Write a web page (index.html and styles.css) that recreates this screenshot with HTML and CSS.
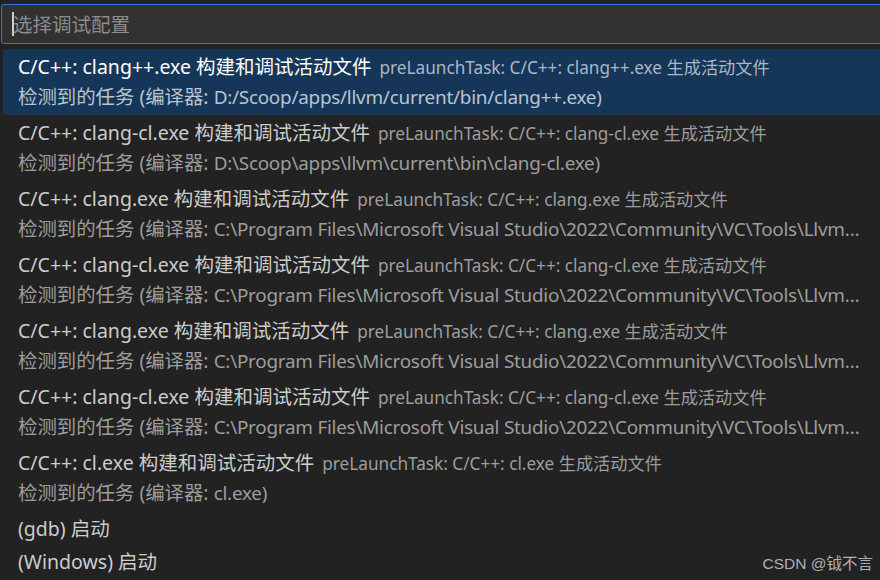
FILE: index.html
```html
<!DOCTYPE html>
<html lang="zh">
<head>
<meta charset="utf-8">
<title>选择调试配置</title>
<link rel="stylesheet" href="styles.css">
</head>
<body>
<div class="picker">
  <div class="input-box">
    <span class="caret"></span>
    <span class="placeholder">选择调试配置</span>
  </div>
  <ul class="list">
    <li class="item two selected">
      <div class="line1"><span class="label">C/C++: clang++.exe 构建和调试活动文件</span><span class="desc">preLaunchTask: C/C++: clang++.exe 生成活动文件</span></div>
      <div class="line2"><span class="task">检测到的任务 (编译器: </span><span class="path">D:/Scoop/apps/llvm/current/bin/clang++.exe)</span></div>
    </li>
    <li class="item two">
      <div class="line1"><span class="label">C/C++: clang-cl.exe 构建和调试活动文件</span><span class="desc">preLaunchTask: C/C++: clang-cl.exe 生成活动文件</span></div>
      <div class="line2"><span class="task">检测到的任务 (编译器: </span><span class="path">D:\Scoop\apps\llvm\current\bin\clang-cl.exe)</span></div>
    </li>
    <li class="item two">
      <div class="line1"><span class="label">C/C++: clang.exe 构建和调试活动文件</span><span class="desc">preLaunchTask: C/C++: clang.exe 生成活动文件</span></div>
      <div class="line2"><span class="task">检测到的任务 (编译器: </span><span class="path">C:\Program Files\Microsoft Visual Studio\2022\Community\VC\Tools\Llvm\x64\bin\clang.exe)</span></div>
    </li>
    <li class="item two">
      <div class="line1"><span class="label">C/C++: clang-cl.exe 构建和调试活动文件</span><span class="desc">preLaunchTask: C/C++: clang-cl.exe 生成活动文件</span></div>
      <div class="line2"><span class="task">检测到的任务 (编译器: </span><span class="path">C:\Program Files\Microsoft Visual Studio\2022\Community\VC\Tools\Llvm\x64\bin\clang-cl.exe)</span></div>
    </li>
    <li class="item two">
      <div class="line1"><span class="label">C/C++: clang.exe 构建和调试活动文件</span><span class="desc">preLaunchTask: C/C++: clang.exe 生成活动文件</span></div>
      <div class="line2"><span class="task">检测到的任务 (编译器: </span><span class="path">C:\Program Files\Microsoft Visual Studio\2022\Community\VC\Tools\Llvm\bin\clang.exe)</span></div>
    </li>
    <li class="item two">
      <div class="line1"><span class="label">C/C++: clang-cl.exe 构建和调试活动文件</span><span class="desc">preLaunchTask: C/C++: clang-cl.exe 生成活动文件</span></div>
      <div class="line2"><span class="task">检测到的任务 (编译器: </span><span class="path">C:\Program Files\Microsoft Visual Studio\2022\Community\VC\Tools\Llvm\bin\clang-cl.exe)</span></div>
    </li>
    <li class="item two">
      <div class="line1"><span class="label">C/C++: cl.exe 构建和调试活动文件</span><span class="desc">preLaunchTask: C/C++: cl.exe 生成活动文件</span></div>
      <div class="line2"><span class="task">检测到的任务 (编译器: </span><span class="path">cl.exe)</span></div>
    </li>
    <li class="item one">
      <div class="line1"><span class="label">(gdb) 启动</span></div>
    </li>
    <li class="item one">
      <div class="line1"><span class="label">(Windows) 启动</span></div>
    </li>
  </ul>
  <div class="watermark">CSDN @钺不言</div>
</div>
</body>
</html>
```
FILE: styles.css
```css
html, body {
  margin: 0;
  padding: 0;
  background: #222222;
  overflow: hidden;
}
body {
  width: 880px;
  height: 580px;
  font-family: "Noto Sans", "Noto Sans CJK SC", sans-serif;
  color: #cccccc;
}
.picker {
  position: relative;
  width: 880px;
  height: 580px;
  overflow: hidden;
}
.input-box {
  margin: 4px -20px 0 1px;
  height: 38px;
  border: 1px solid #2b7bd6;
  border-radius: 3px;
  background: #313131;
  display: flex;
  align-items: center;
  padding-left: 10px;
  box-sizing: content-box;
}
.caret {
  width: 2px;
  height: 24px;
  background: #cfcfcf;
  margin-right: -1px;
}
.placeholder {
  font-size: 19.5px;
  color: #8c8c8c;
  font-family: "Noto Sans CJK SC", sans-serif;
  line-height: 24px;
}
.list {
  list-style: none;
  margin: 5px -20px 0 3px;
  padding: 0;
}
.item {
  padding: 0 0 0 15px;
  border-radius: 4px;
  margin-right: 20px;
}
.item.two { height: 66px; }
.item.one { height: 33px; }
.line1 {
  height: 33px;
  line-height: 35px;
  white-space: nowrap;
  overflow: hidden;
}
.label {
  font-size: 19.5px;
  color: #cccccc;
}
.desc {
  font-size: 17.2px;
  color: #9d9d9d;
  margin-left: 8px;
}
.line2 {
  height: 33px;
  line-height: 29px;
  font-size: 18.9px;
  color: #9d9d9d;
  white-space: nowrap;
  overflow: hidden;
  text-overflow: ellipsis;
  width: 848px;
}
.task {
  font-size: 19.4px;
}
.path {
  letter-spacing: -0.25px;
}
.item.selected {
  background: #163659;
  margin-right: 0;
}
.item.selected .label { color: #ffffff; }
.item.selected .desc { color: #a9b7c6; }
.item.selected .line2 { color: #b9c4cf; }
.watermark {
  position: absolute;
  right: 7px;
  bottom: 7px;
  font-size: 15.5px;
  color: #b0b0b0;
  font-family: "Liberation Sans", "Noto Sans CJK SC", sans-serif;
}
```
